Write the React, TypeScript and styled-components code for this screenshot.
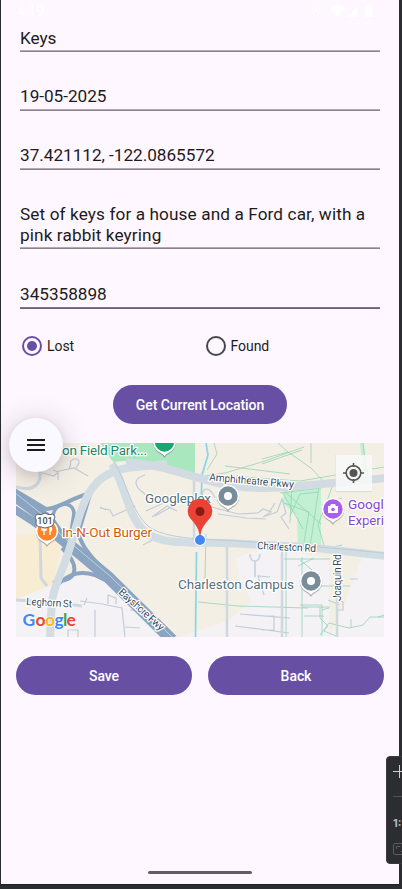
import React from 'react';
import styled, { createGlobalStyle } from 'styled-components';

const Global = createGlobalStyle`
  * { box-sizing: border-box; }
  body { margin: 0; background: #2b2d30; font-family: Roboto, sans-serif; overflow: hidden; }
`;
const Device = styled.div`
  position: relative;
  width: 402px;
  height: 889px;
  overflow: hidden;
  background: #2b2d30;
  padding: 0 3px 4px 1px;
`;
const Screen = styled.main`
  height: 885px;
  background: #fef7ff;
  border-bottom: 1px solid #1e1f22;
  display: flex;
  flex-direction: column;
  padding: 0 15px;
`;
const StatusBar = styled.header`
  height: 23px;
  flex: none;
  display: flex;
  justify-content: space-between;
  color: #fff;
  font-size: 14px;
  line-height: 23px;
  padding: 0 11px 0 1px;
`;
const Field = styled.div<{ $h: number; $focus?: boolean; $track?: number; $pad?: number }>`
  flex: none;
  height: ${p => p.$h}px;
  margin: 0 4px 0 4px;
  display: flex;
  align-items: flex-end;
  padding-bottom: ${p => p.$pad ?? 4}px;
  border-bottom: 1px solid ${p => (p.$focus ? '#6b6080' : '#88838b')};
  box-shadow: inset 0 -1px ${p => (p.$focus ? '#7c728d' : '#b0aab3')};
  font-size: 17.2px;
  line-height: 20.5px;
  letter-spacing: ${p => p.$track ?? -0.03}px;
  color: #1d1b20;
`;
const Radios = styled.div`
  flex: none;
  display: flex;
  height: 38px;
  margin-top: 18px;
  padding-left: 6px;
`;
const Radio = styled.label`
  width: 183.5px;
  flex: none;
  display: flex;
  align-items: center;
  gap: 5px;
  font-size: 14px;
  letter-spacing: -0.05px;
  color: #1d1b20;
`;
const Ring = styled.span<{ $on?: boolean }>`
  width: 20px;
  height: 20px;
  border-radius: 50%;
  border: 2px solid ${p => (p.$on ? '#6750a4' : '#49454f')};
  display: grid;
  place-items: center;
  &::after {
    content: '';
    width: 10px;
    height: 10px;
    border-radius: 50%;
    background: ${p => (p.$on ? '#6750a4' : 'transparent')};
  }
`;
const Button = styled.button<{ $w: number }>`
  width: ${p => p.$w}px;
  height: 39px;
  border: 0;
  padding: 0;
  border-radius: 20px;
  background: #6750a4;
  color: #fff;
  font: 500 14px Roboto, sans-serif;
  letter-spacing: -0.06px;
`;
const Center = styled.div`
  flex: none;
  display: flex;
  justify-content: center;
  margin-top: 20px;
`;
const MapFrame = styled.section`
  flex: none;
  height: 194px;
  margin-top: 19px;
  width: 368px;
  svg { display: block; }
`;
const Actions = styled.div`
  display: flex;
  justify-content: space-between;
  margin-top: 19px;
`;
const NavPill = styled.div`
  width: 104px;
  height: 3px;
  border-radius: 2px;
  background: #625d65;
  margin: auto auto 10px;
  flex: none;
`;
const MenuBubble = styled.button`
  position: absolute;
  left: 9px;
  top: 418px;
  width: 54px;
  height: 54px;
  border: 0;
  padding: 0;
  border-radius: 50%;
  background: #f9f9ff;
  box-shadow: 0 3px 30px rgba(50, 30, 60, 0.2), 0 4px 11px rgba(50, 30, 60, 0.12);
  display: grid;
  place-items: center;
`;
const ZoomPanel = styled.aside`
  position: absolute;
  left: 386px;
  top: 756px;
  width: 40px;
  height: 108px;
  border-radius: 4px;
  border: 1px solid #393b40;
  background: #2b2d30;
  color: #ced0d6;
  display: flex;
  flex-direction: column;
  padding: 7px 0 0 6px;
  overflow: hidden;
  svg { flex: none; }
`;
const Divider = styled.hr`
  width: 26px;
  margin: 18px 0 0;
  border: 0;
  border-top: 1px solid #505257;
`;
const Scale = styled.span`
  margin: 18px 0 11px;
  font: bold 11px/16px Inter, sans-serif;
  color: #b4b8bf;
`;

function Pin({ x, y, color, children }: { x: number; y: number; color: string; children?: React.ReactNode }) {
  return (
    <g transform={`translate(${x} ${y})`}>
      <path d="M0 15c-2-4-5-4-8-7a11.2 11.2 0 1 1 16 0c-3 3-6 3-8 7z" fill="#7779" transform="translate(0 1)" />
      <path d="M0 14c-2-3-5-3-8-6a11.2 11.2 0 1 1 16 0c-3 3-6 3-8 6z" fill="#fff" />
      <circle r="9.7" fill={color} />
      {children}
    </g>
  );
}

const Label = styled.text<{ $c?: string; $s?: number }>`
  font-family: Roboto, sans-serif;
  font-size: ${p => p.$s ?? 13.6}px;
  fill: ${p => p.$c ?? '#53707c'};
  paint-order: stroke;
  stroke: #fff;
  stroke-width: 2.5px;
  stroke-linejoin: round;
`;

function CampusMap() {
  return (
    <svg width="368" height="194" viewBox="16 443 368 194" fill="none">
      <rect x="16" y="443" width="368" height="194" fill="#f4efe4" />
      <path d="M16 535h45l-8 50-37 14z" fill="#f8ecd3" />
      <path d="M16 599l37-14 31-13 28 14 28 18 24 33H16z" fill="#f4f2f4" />
      <path d="M384 556l-22 2-16 42-16 37h54zM236 558l28-10 65 10v79H180l12-4 36-12 24-20-12-20z" fill="#f4f2f4" />
      <path d="M100 443h95v33l-30-8-30-8-22 2z" fill="#a9e8be" />
      <path d="M360 443h4l3 30-3 2zM284 489l37-5v62l5 3-28 2-1-35-14-13z" fill="#c2f0d3" />
      <g stroke="#c3cdd9" strokeWidth="1.2">
        <path d="M39 472l15 4 5-5 15-3 14 8M58 480v-8l-5-2M70 463c2-6 10-5 9 0l-3 5M71 463l-2 6M100 508l10 2 3 6 22-10M100 507l6 3M145 475c-11 3-11 9-5 15l12 10M146 511l22-10 40 5 30 8 20-1 5-4 8 3-8 5M218 514l28 4 20 1M155 516l25-14M143 545l15-8M152 517l15-11 10 5M263 517l14-5 5-13 4 14-5 4 8 12M270 511l5-8" />
        <path d="M80 601l22 3 20 4 3 29M84 605l3-7M108 604v-9l8 3v6M95 610v27M68 637v-7h10v7M125 627l15 1M130 610l20 2M240 614l50 4M235 626l54 7M262 616h12v14h-12M264 595l-6-19 12 1M337 600v10h6v-8zM350 579h8M378 617l6-2M215 498c-7-15-15-8-12 0" />
      </g>
      <g stroke="#94d3b6" strokeWidth=".8">
        <path d="M205 476l20-3 40-12 39-14M207 470l10-16-3-11M225 466l65 8M230 476l70 5 84-14M262 459l26-7 23 16 14 15M288 452l-10-9M311 443v20M262 464l40-14M280 493l41-5M283 493l20 36M284 503l25 9-5 30M292 485l-2 38M285 492l36 32M290 516l10-22 19-2M319 487l-9 60M334 482l-16 43 8 27M322 505l20-7" />
        <path d="M198 602l40 4 70 2M286 549v88M284 559h46M302 557v80M302 586h48M300 605h22v31M302 607h28M320 607v11l8 8-4 5 12 5M322 610l7-2M298 566l16-8M300 560l12 10M320 635l9-12 20 5 14-3 7-8h14M351 628v-9M304 590h15M304 616h20M328 600l12 5" />
        <path d="M194 505l9 15M206 534l-1 45M325 549l17-4M363 443l4 32" />
      </g>
      <path d="M195.500 637l1-85M200 540l2-65 6-20-2-12" stroke="#8cd7e6" strokeWidth="1.8" />
      <g stroke="#ced8df" strokeWidth="3">
        <path d="M40 464v14c-3 11-13 12-24 9M40 535l1 43 6 8M16 600l36 2 30 4" />
        <path d="M227 542v95M282 546v91M337 555v82M194 480v60" strokeWidth="2.5" />
        <path d="M250 554c0 9 9 10 10 0M255 561v16" strokeWidth="2" />
      </g>
      <g stroke="#8aa4c1">
        <path d="M14 490l32 19c13 0 27-12 42-15" strokeWidth="4" />
        <path d="M92 486L79 529" strokeWidth="5" />
        <path d="M53 518c0-17 20-18 21-5l-3 20" strokeWidth="3.5" />
        <path d="M14 495l34 25 12 17 48 40 64 63" strokeWidth="12" />
        <path d="M14 509l20 13 21 15" strokeWidth="8" />
        <path d="M78 533c4 11 6 18 33 44" strokeWidth="4" />
        <path d="M62 548c17 16 15 29 3 32l-12 3M57 585c14-13 25-14 38-10l14 7" strokeWidth="4" />
      </g>
      <path d="M14 492l34 27 12 15 50 42 62 61" stroke="#bdd0df" strokeWidth="1" />
      <path d="M50 640c2-42 0-41 12-70 13-30 16-65 32-84 8-11 24-18 43-19l30-3M112 464c13 20 15 51 32 67 17 15 50 11 83 12l80 4 80 9" stroke="#d2dce3" strokeWidth="8" />
      <path d="M126 462c40 3 59 14 96 22 34 7 70 3 100 0l64-6" stroke="#d2dbe2" strokeWidth="8" />
      <path d="M114 462c13 20 17 50 35 65 20 13 58 12 90 14l70 5 75 7" stroke="#bdccd8" strokeWidth="1" />
      <g>
        <Pin x={164.5} y={442} color="#16a873" />
        <Pin x={228} y={496} color="#788d99"><circle r="4" fill="#fff" /></Pin>
        <Pin x={311} y={581} color="#788d99"><circle r="4" fill="#fff" /></Pin>
        <Pin x={333} y={509} color="#a95fee">
          <path d="M-5-3h2l1-2h4l1 2h2v7H-5z" fill="#fff" /><circle cy=".5" r="1.8" fill="#a95fee" />
        </Pin>
        <Pin x={47} y={531} color="#ff8427">
          <path d="M-3-5v9M-5-5v4h4v-4M3 4v-9q3 3 0 6" stroke="#fff" strokeWidth="1.4" />
        </Pin>
      </g>
      <path d="M37 514q4 2 8-1 4 3 8 1l2 3q-2 3-1 6-1 4-5 4l-4 1-4-1q-5 0-5-4 1-3-1-6z" fill="#fff" stroke="#62666a" />
      <text x="45" y="524" textAnchor="middle" fontFamily="Roboto" fontSize="9" fontWeight="500" fill="#454a50">101</text>
      <Label x="62" y="454.5" $c="#208561" textLength="85">on Field Park...</Label>
      <Label x="145" y="503" textLength="66">Googleplex</Label>
      <Label x="178" y="589" textLength="116">Charleston Campus</Label>
      <Label x="62" y="537" $c="#cc5b0c" textLength="90">In-N-Out Burger</Label>
      <Label x="348" y="508.5" $c="#8747c8">Googl</Label>
      <Label x="348" y="524.5" $c="#8747c8" textLength="36">Experi</Label>
      <Label $s={10.4} $c="#38495b" transform="translate(209 480.500) rotate(5)" textLength="85">Amphitheatre Pkwy</Label>
      <Label $s={10.4} $c="#38495b" transform="translate(257 549) rotate(3)" textLength="59">Charleston Rd</Label>
      <Label $s={10.4} $c="#38495b" transform="translate(341 601) rotate(-90)" textLength="47">Joaquin Rd</Label>
      <Label $s={10.4} $c="#38495b" transform="translate(26 605) rotate(3)" textLength="46">Leghorn St</Label>
      <Label $s={10.4} $c="#38495b" transform="translate(118 593) rotate(42)" textLength="57">Bayshore Fwy</Label>
      <circle cx="200" cy="540" r="6" fill="#fff" />
      <circle cx="200" cy="540" r="5" fill="#4285f4" />
      <path d="M200 536c-1-8-4-11-8-16a12 12 0 1 1 16 0c-4 5-7 8-8 16z" fill="#ea4335" stroke="#d73529" strokeWidth=".5" />
      <circle cx="200" cy="511.500" r="4.500" fill="#891a14" />
      <text x="22.5" y="626" fontFamily="Lato" fontSize="17.5" fontWeight="700" stroke="#fff" strokeWidth="1" paintOrder="stroke">
        <tspan x="22.5" fill="#4285f4">G</tspan><tspan x="35.5" fill="#ea4335">o</tspan><tspan x="45" fill="#fbbc04">o</tspan><tspan x="54.5" fill="#4285f4">g</tspan><tspan x="63" fill="#34a853">l</tspan><tspan x="66.5" fill="#ea4335">e</tspan>
      </text>
      <rect x="335" y="455" width="37" height="37" rx="1" fill="#aaa" opacity=".3" />
      <rect x="335.500" y="455" width="36.500" height="36" rx="1" fill="#fff" fillOpacity=".8" />
      <g stroke="#555" strokeWidth="1.6">
        <circle cx="353.500" cy="473" r="7.300" />
        <path d="M353.500 463v4M353.500 479v4M343 473h4M360 473h4" />
      </g>
      <circle cx="353.500" cy="473" r="4" fill="#555" />
    </svg>
  );
}

export default function App() {
  return (
    <>
      <Global />
      <Device>
        <Screen>
          <StatusBar>
            <span>4:19</span>
            <svg width="62" height="23" viewBox="310 0 62 23" fill="#fff">
              <path d="M315 17c-3-4-4-5-4-7a4 4 0 0 1 8 0c0 2-1 3-4 7z" fill="none" stroke="#fff" />
              <circle cx="315" cy="10" r="1.500" />
              <path d="M329 8q7-6 15 0l-7.500 9zM346 17l11-11v11zM364 6h2V5h3v1h3v11h-8z" />
            </svg>
          </StatusBar>
          <Field $h={29} $pad={3}>Keys</Field>
          <Field $h={59}>19-05-2025</Field>
          <Field $h={59}>37.421112, -122.0865572</Field>
          <Field $h={79} $track={0.11} $pad={3}>Set of keys for a house and a Ford car, with a pink rabbit keyring</Field>
          <Field $h={60} $focus>345358898</Field>
          <Radios>
            <Radio><Ring $on />Lost</Radio>
            <Radio><Ring />Found</Radio>
          </Radios>
          <Center><Button $w={174}>Get Current Location</Button></Center>
          <MapFrame><CampusMap /></MapFrame>
          <Actions>
            <Button $w={176}>Save</Button>
            <Button $w={176}>Back</Button>
          </Actions>
          <NavPill />
        </Screen>
        <MenuBubble aria-label="Menu">
          <svg width="18" height="12" viewBox="0 0 18 12" fill="#1b1b21"><path d="M0 0h18v2H0zM0 5h18v2H0zM0 10h18v2H0z" /></svg>
        </MenuBubble>
        <ZoomPanel>
          <svg width="14" height="14" viewBox="0 0 14 14" stroke="#ced0d6"><path d="M0 7.500h14M6.500 1v13" /></svg>
          <Divider />
          <Scale>1:</Scale>
          <svg width="18" height="14" viewBox="0 0 18 14" fill="none" stroke="#5a5d63">
            <rect x=".5" y="1.500" width="17" height="11" rx="1.500" /><path d="M3.500 7V4.500h4M8 9.500h4V7" />
          </svg>
        </ZoomPanel>
      </Device>
    </>
  );
}
